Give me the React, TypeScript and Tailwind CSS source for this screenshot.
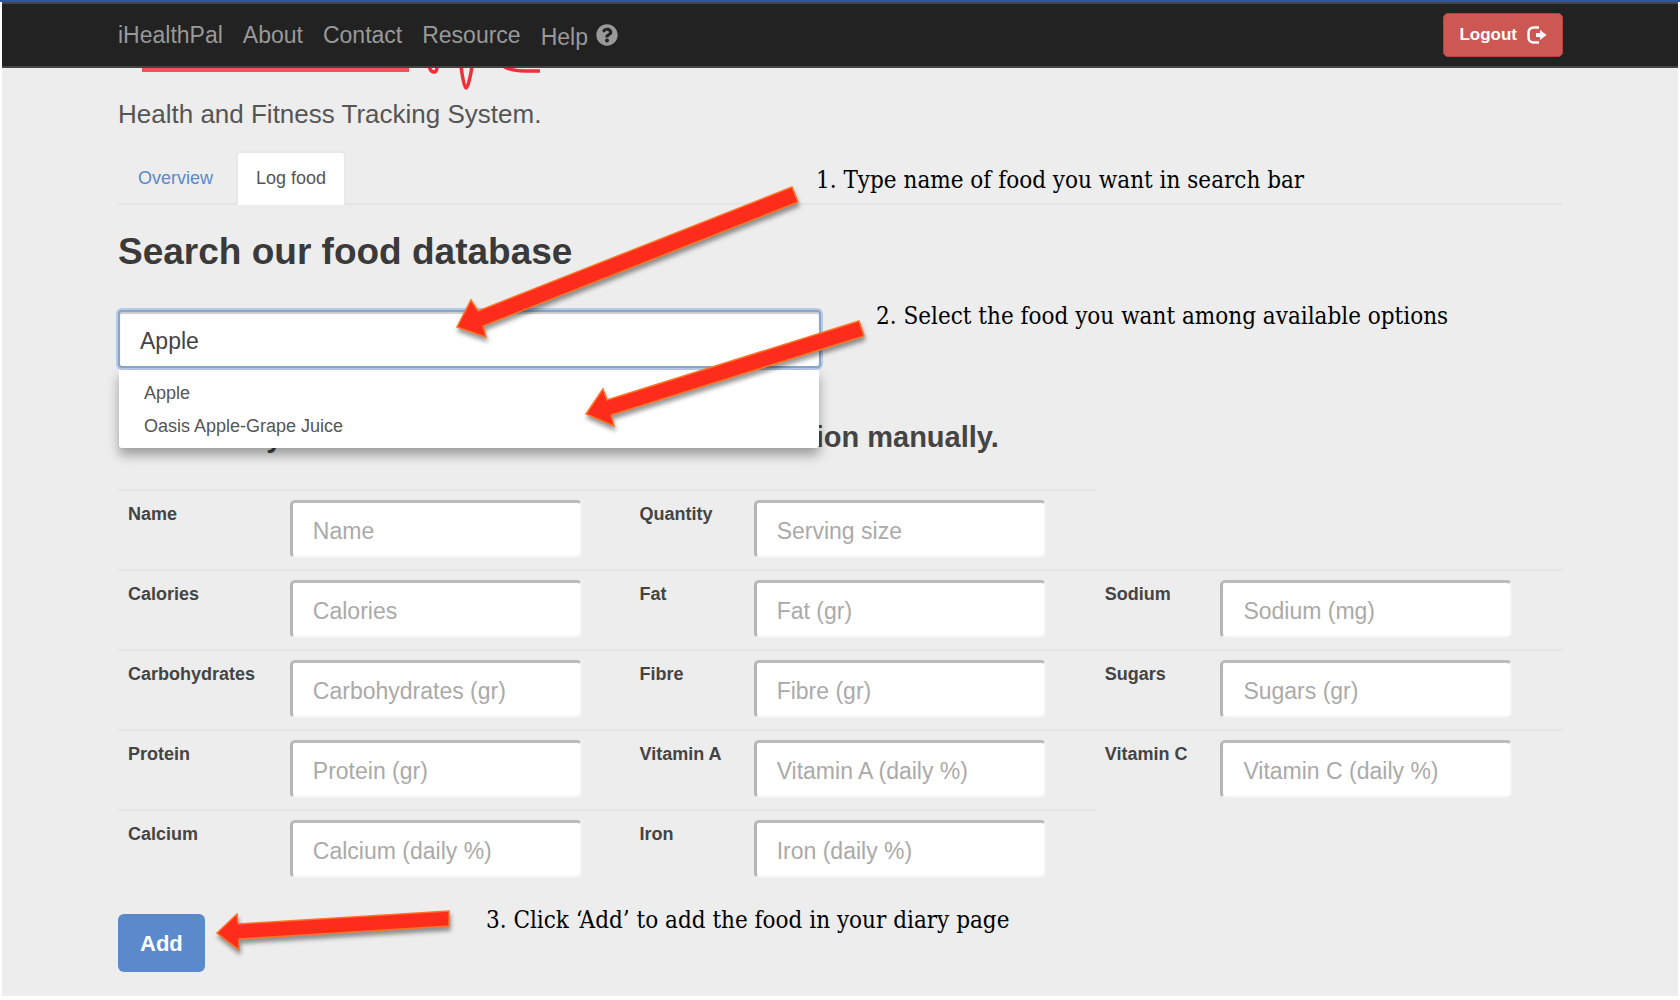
import { FaQuestionCircle } from "react-icons/fa";

const navLinks = ["iHealthPal", "About", "Contact", "Resource"];

type Field = { label: string; hint: string };

const rows: Field[][] = [
  [
    { label: "Name", hint: "Name" },
    { label: "Quantity", hint: "Serving size" },
  ],
  [
    { label: "Calories", hint: "Calories" },
    { label: "Fat", hint: "Fat (gr)" },
    { label: "Sodium", hint: "Sodium (mg)" },
  ],
  [
    { label: "Carbohydrates", hint: "Carbohydrates (gr)" },
    { label: "Fibre", hint: "Fibre (gr)" },
    { label: "Sugars", hint: "Sugars (gr)" },
  ],
  [
    { label: "Protein", hint: "Protein (gr)" },
    { label: "Vitamin A", hint: "Vitamin A (daily %)" },
    { label: "Vitamin C", hint: "Vitamin C (daily %)" },
  ],
  [
    { label: "Calcium", hint: "Calcium (daily %)" },
    { label: "Iron", hint: "Iron (daily %)" },
  ],
];

function NavBar() {
  return (
    <header className="flex h-[66px] items-center justify-between border-t-2 border-b-2 border-[#444] bg-[#222] pr-[115px] pl-[116px]">
      <nav className="flex items-center gap-5 text-[23px] leading-[30px] text-[#999]">
        {navLinks.map((name) => (
          <a key={name} href="#">
            {name}
          </a>
        ))}
        <a href="#" className="flex items-center gap-2 pt-1">
          Help
          <FaQuestionCircle className="mb-1 size-[22px]" aria-hidden="true" />
        </a>
      </nav>
      <button
        type="button"
        className="flex h-[44px] items-center gap-2.5 rounded-[5px] border border-[#b9423e] bg-[#cc5753] px-[15px] text-[17px] font-bold text-white"
      >
        Logout
        <svg viewBox="0 0 20 18" className="h-[18px] w-5" aria-hidden="true">
          <path
            d="M12 1.5H6.5A5 5 0 0 0 1.500 6.500V11.500A5 5 0 0 0 6.500 16.500H12"
            fill="none"
            stroke="currentColor"
            strokeWidth="2.500"
          />
          <path d="M9 7h4V4L19.500 9l-6.500 5V11H9z" fill="currentColor" />
        </svg>
      </button>
    </header>
  );
}

function LogoEdge() {
  return (
    <svg width="420" height="24" viewBox="142 68 420 24" className="ml-6 block" aria-hidden="true">
      <rect x="142" y="64" width="267" height="8" fill="#f0545a" />
      <g fill="none" stroke="#ef3038" strokeWidth="3.500">
        <path d="M429 66c1 4 3 6 5 6s3-3 3-6" />
        <path d="M461 66c1 8 3 22 5 22S471 74 472 66" />
        <path d="M503 66c6 4 14 5 22 5h15" />
      </g>
    </svg>
  );
}

function Arrow({ points }: { points: string }) {
  return <polygon points={points} fill="#fe2c1a" stroke="#fb7426" strokeWidth="1.500" />;
}

function Guide() {
  return (
    <>
      <svg
        width="900"
        height="996"
        viewBox="0 0 900 996"
        className="pointer-events-none absolute top-0 left-0 z-20 drop-shadow-[1px_4px_2px_rgba(0,0,0,0.4)]"
        aria-hidden="true"
      >
        <Arrow points="457,327 471,300 478,311 792,187 798,202 483,326 486,337" />
        <Arrow points="586,414 603,389 607,400 859,321 864,336 611,415 614,426" />
        <Arrow points="217,933 237,914 238,924 449,911 449,926 239,939 239,950" />
      </svg>
      <div className="font-['DejaVu_Serif_Condensed','DejaVu_Serif',serif] text-2xl leading-8 whitespace-nowrap text-black">
        <p className="absolute top-[164px] left-[816px] z-20">
          1. Type name of food you want in search bar
        </p>
        <p className="absolute top-[300px] left-[876px] z-20">
          2. Select the food you want among available options
        </p>
        <p className="absolute top-[904px] left-[486px] z-20">
          3. Click ‘Add’ to add the food in your diary page
        </p>
      </div>
    </>
  );
}

function FoodSearch() {
  return (
    <div className="relative mt-[38px] w-[703px] max-w-full">
      <input
        aria-label="Search food"
        defaultValue="Apple"
        className="block h-[58px] w-full rounded-[4px] border-2 border-[#8aa5cb] bg-white px-5 pt-1 text-[23px] text-[#444] shadow-[0_0_0_2px_#b5cae6,inset_0_2px_1px_#ccc] outline-none"
      />
      <ul className="absolute top-[60px] right-0.5 left-px z-10 rounded-b-[3px] bg-white pt-[7px] pb-[5px] text-lg leading-[33px] text-[#555] shadow-[0_7px_12px_rgba(0,0,0,0.35)]">
        <li className="px-[25px]">Apple</li>
        <li className="px-[25px]">Oasis Apple-Grape Juice</li>
      </ul>
    </div>
  );
}

function NutritionTable() {
  return (
    <table className="mt-9 w-full table-fixed border-collapse">
      <colgroup>
        <col className="w-[11.2%]" />
        <col className="w-[24.2%]" />
        <col className="w-[7.9%]" />
        <col className="w-[24.3%]" />
        <col className="w-[8%]" />
        <col className="w-[24.4%]" />
      </colgroup>
      <tbody>
        {rows.map((row) => (
          <tr key={row[0].label} className="h-20 align-top">
            {row.map(({ label, hint }) => {
              const id = label.toLowerCase().replace(" ", "-");
              return [
                <th key={id} className="border-t-2 border-[#e5e5e5] px-2.5 pt-[9px] text-left">
                  <label htmlFor={id} className="block text-lg leading-7 font-bold whitespace-nowrap text-[#444]">
                    {label}
                  </label>
                </th>,
                <td key={id + "-field"} className="border-t-2 border-[#e5e5e5] px-2.5 pt-[9px]">
                  <input
                    id={id}
                    placeholder={hint}
                    className="block h-[58px] w-full max-w-[292px] rounded-[5px] border-t-3 border-r-2 border-b-2 border-l-3 border-t-[#bbb] border-r-[#f4f4f4] border-b-[#f4f4f4] border-l-[#b5b5b5] bg-white px-5 pt-1 text-[23px] text-[#444] outline-none placeholder:text-[#aaa]"
                  />
                </td>,
              ];
            })}
          </tr>
        ))}
      </tbody>
    </table>
  );
}

export default function App() {
  return (
    <div className="relative bg-white pr-0.5 pb-1 pl-0.5 font-['Liberation_Sans',Arial,sans-serif]">
      <div className="-mx-0.5 h-0.5 bg-[#3355a0]" />
      <div className="bg-[#ededed]">
        <NavBar />
        <main className="pr-[115px] pb-6 pl-[116px]">
          <LogoEdge />
          <p className="mt-[7px] text-[26px] leading-[30px] text-[#555]">Health and Fitness Tracking System.</p>
          <div className="mt-[22px] flex h-[54px] border-b-2 border-[#e5e5e5] text-lg leading-[50px]">
            <a href="#" className="px-5 pt-0.5 text-[#5a89cc]">
              Overview
            </a>
            <a href="#" className="ml-[3px] h-[54px] rounded-t-[4px] border-2 border-b-0 border-[#e8e8e8] bg-white px-[18px] text-[#555]">
              Log food
            </a>
          </div>
          <h2 className="mt-[27px] text-[37px] leading-10 font-bold text-[#3a3a3a]">Search our food database</h2>
          <FoodSearch />
          <h3 className="mt-[53px] text-[29px] leading-8 font-bold text-[#444]">
            Otherwise you can enter foods nutritional information manually.
          </h3>
          <NutritionTable />
          <button type="button" className="mt-6 block h-[58px] rounded-[6px] bg-[#5a89cc] px-[22px] text-[22px] font-bold text-white">
            Add
          </button>
        </main>
      </div>
      <Guide />
    </div>
  );
}
